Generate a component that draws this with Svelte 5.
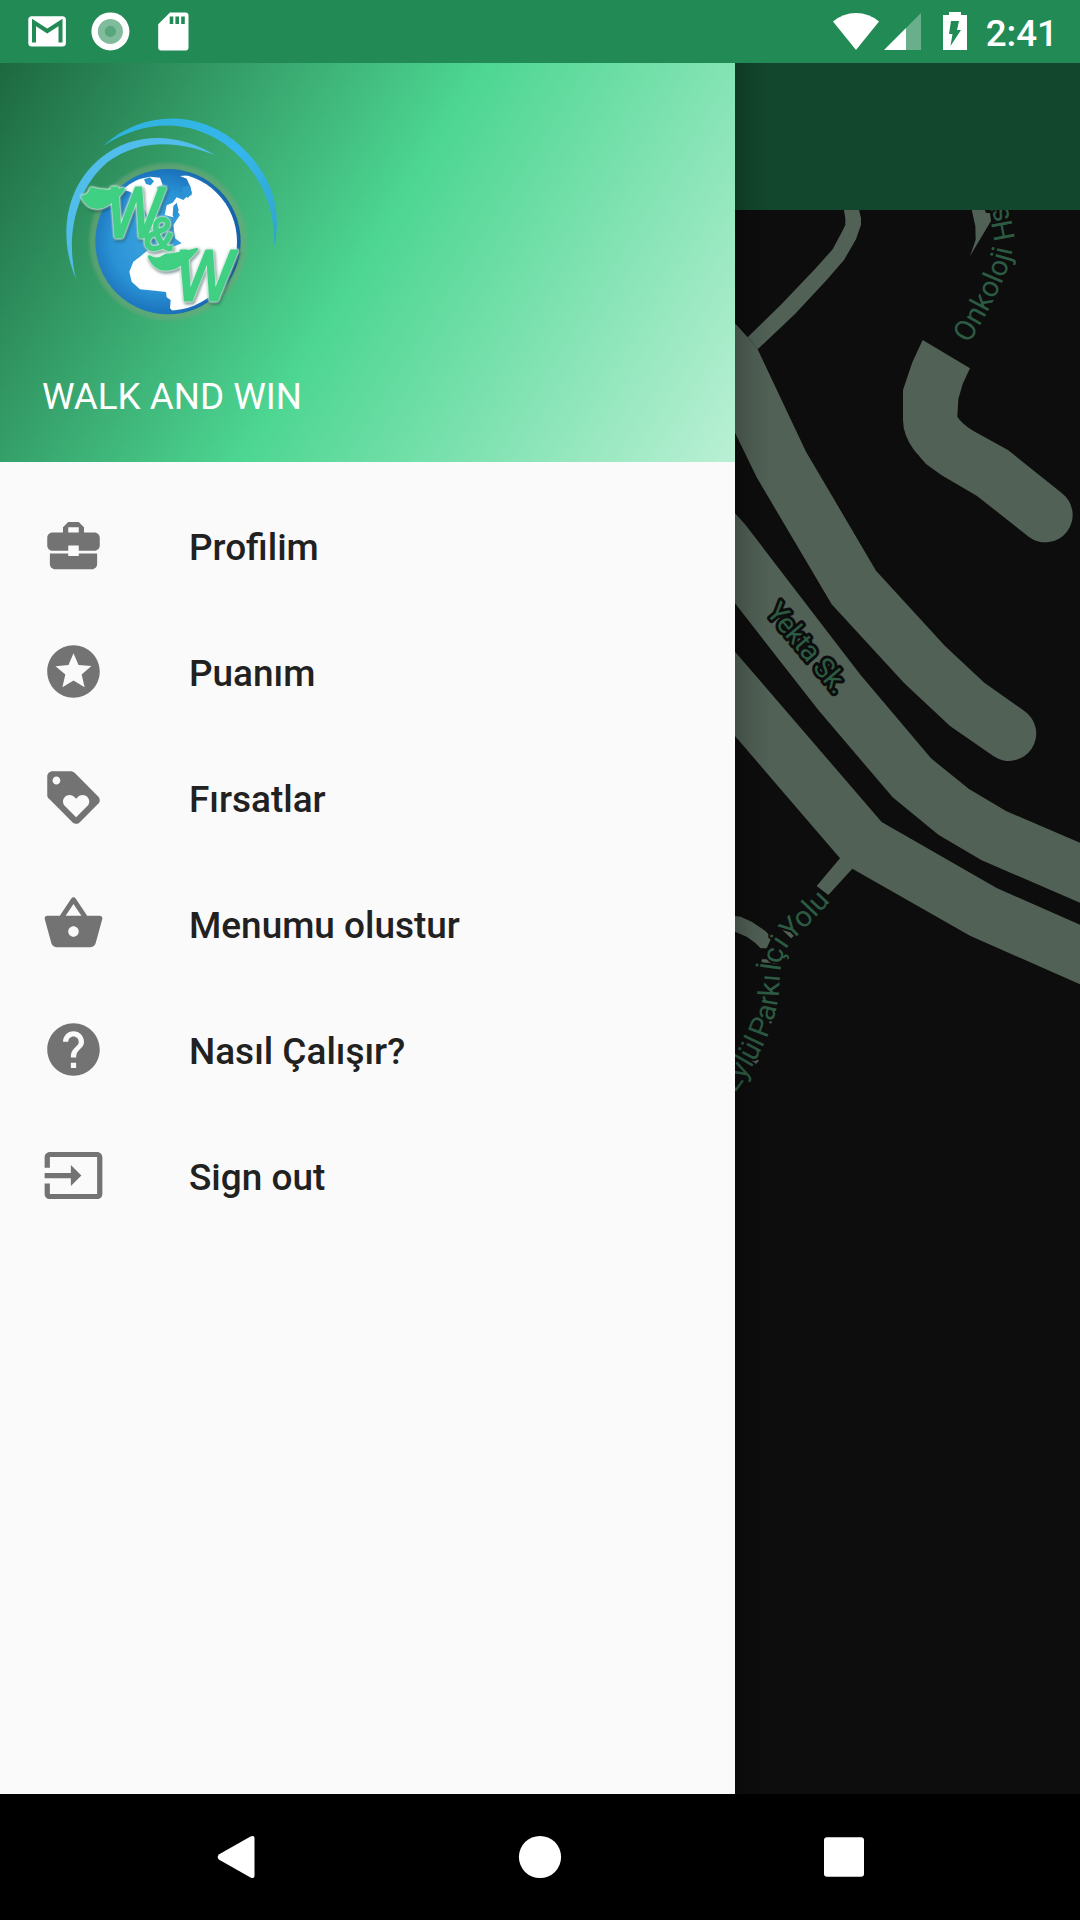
<script>
  const items = [
    { label: 'Profilim', icon: 'M10 16v-1H3.01L3 19c0 1.11.89 2 2 2h14c1.11 0 2-.89 2-2v-4h-7v1h-4zm10-9h-4.01V5l-2-2h-4l-2 2v2H4c-1.1 0-2 .9-2 2v3c0 1.11.89 2 2 2h6v-2h4v2h6c1.1 0 2-.9 2-2V9c0-1.1-.9-2-2-2zm-6 0h-4V5h4v2z' },
    { label: 'Puanım', icon: 'M11.99 2C6.47 2 2 6.48 2 12s4.47 10 9.99 10C17.52 22 22 17.52 22 12S17.52 2 11.99 2zm4.24 16L12 15.45 7.77 18l1.12-4.81-3.73-3.23 4.92-.42L12 5l1.92 4.53 4.92.42-3.73 3.23L16.23 18z' },
    { label: 'Fırsatlar', icon: 'M21.41 11.58l-9-9C12.05 2.22 11.55 2 11 2H4c-1.1 0-2 .9-2 2v7c0 .55.22 1.05.59 1.42l9 9c.36.36.86.58 1.41.58.55 0 1.05-.22 1.41-.59l7-7c.37-.36.59-.86.59-1.41 0-.55-.23-1.06-.59-1.42zM5.5 7C4.67 7 4 6.33 4 5.5S4.67 4 5.5 4 7 4.67 7 5.5 6.33 7 5.5 7zm11.77 8.27L13 19.54l-4.27-4.27C8.28 14.81 8 14.19 8 13.5c0-1.38 1.12-2.5 2.5-2.5.69 0 1.32.28 1.77.74l.73.72.73-.73c.45-.45 1.08-.73 1.77-.73 1.38 0 2.5 1.12 2.5 2.5 0 .69-.28 1.32-.73 1.77z' },
    { label: 'Menumu olustur', icon: 'M17.21 9l-4.38-6.56c-.19-.28-.51-.42-.83-.42-.32 0-.64.14-.83.43L6.79 9H2c-.55 0-1 .45-1 1 0 .09.01.18.04.27l2.54 9.27c.23.84 1 1.46 1.92 1.46h13c.92 0 1.69-.62 1.93-1.46l2.54-9.27L23 10c0-.55-.45-1-1-1h-4.79zM9 9l3-4.4L15 9H9zm3 8c-1.1 0-2-.9-2-2s.9-2 2-2 2 .9 2 2-.9 2-2 2z' },
    { label: 'Nasıl Çalışır?', icon: 'M12 2C6.48 2 2 6.48 2 12s4.48 10 10 10 10-4.48 10-10S17.52 2 12 2zm1 17h-2v-2h2v2zm2.07-7.75l-.9.92C13.45 12.9 13 13.5 13 15h-2v-.5c0-1.1.45-2.1 1.17-2.83l1.24-1.26c.37-.36.59-.86.59-1.41 0-1.1-.9-2-2-2s-2 .9-2 2H8c0-2.21 1.79-4 4-4s4 1.79 4 4c0 .88-.36 1.68-.93 2.25z' },
    { label: 'Sign out', icon: 'M21 3.01H3c-1.1 0-2 .9-2 2V9h2V4.99h18v14.03H3V15H1v4.01c0 1.1.9 1.98 2 1.98h18c1.1 0 2-.88 2-1.98v-14c0-1.11-.9-2-2-2zM11 16l4-4-4-4v3H1v2h10v3z' }
  ];
</script>

<div class="screen">
  <header class="status">
    <div class="group">
      <svg width="63" height="63" viewBox="16 0 63 63">
        <rect x="28.3" y="16.3" width="37.6" height="30.2" rx="3.5" fill="#fff" />
        <path d="M34 42.5V22.5L47.2 31 60.5 22.5V42.5" fill="none" stroke="#228a55" stroke-width="4" />
      </svg>
      <svg width="63" height="63" viewBox="79 0 63 63">
        <circle cx="110.4" cy="31.4" r="19" fill="#fff" />
        <circle cx="110.4" cy="31.4" r="12.5" fill="#80bb9c" />
        <circle cx="110.4" cy="31.4" r="5.6" fill="#58a67c" />
      </svg>
      <svg width="63" height="63" viewBox="142 0 63 63">
        <path d="M170 12.5H185.500a3 3 0 0 1 3 3V47.500a3 3 0 0 1-3 3H161.200a3 3 0 0 1-3-3V24.300z" fill="#fff" />
        <path d="M169.700 16.500h3.600V24h-3.600zM175.400 16.500h3.600V24h-3.600zM181.200 16.500h3.600V24h-3.600z" fill="#228a55" />
      </svg>
    </div>
    <div class="group">
      <svg width="46" height="63" viewBox="833 0 46 63">
        <path d="M833 21.500Q843 13 856 13T879 21.500L856 50z" fill="#fff" />
      </svg>
      <svg class="signal" width="37" height="63" viewBox="884 0 37 63">
        <path d="M921 13V50H906V28z" fill="#fff" opacity=".32" />
        <path d="M906 28V50H884z" fill="#fff" />
      </svg>
      <svg class="battery" width="24" height="63" viewBox="943 0 24 63">
        <path d="M949 12H961V15H967V50H943V15H949z" fill="#fff" />
        <path d="M951 21H959L957 30H961L950.500 46 952.500 34H949z" fill="#228a55" />
      </svg>
      <span class="time">2:41</span>
    </div>
  </header>

  <div class="body">
    <aside class="drawer">
      <div class="head">
        <svg class="logo" width="260" height="240" viewBox="0 0 780 720">
          <defs>
            <radialGradient id="sea" cx=".45" cy=".5" r=".56">
              <stop offset="0" stop-color="#3ea6e2" />
              <stop offset=".6" stop-color="#2b93d6" />
              <stop offset=".88" stop-color="#1c73bd" />
              <stop offset="1" stop-color="#165a9f" />
            </radialGradient>
            <linearGradient id="arcA" x1="0" y1="0" x2="1" y2="1">
              <stop offset="0" stop-color="#2eb3dc" />
              <stop offset=".5" stop-color="#35b6ee" />
              <stop offset="1" stop-color="#2fa5c8" />
            </linearGradient>
            <filter id="soft"><feGaussianBlur stdDeviation="1.6" /></filter>
            <filter id="shade"><feGaussianBlur stdDeviation="4" /></filter>
            <clipPath id="globe"><circle cx="384" cy="425" r="207" /></clipPath>
          </defs>
          <g filter="url(#soft)">
            <circle cx="384" cy="425" r="236" fill="#71a67a" opacity=".6" filter="url(#shade)" />
            <circle cx="384" cy="425" r="218" fill="url(#sea)" />
            <g clip-path="url(#globe)" fill="#fff">
              <path d="M420 228L440 236 452 262 455 285 440 290 430 300 410 292 398 308 380 316 374 345 400 352 410 330 420 345 400 375 405 415 425 430 400 440 330 445 300 470 280 485 268 515 275 545 300 568 345 572 378 576 380 592 392 600 390 625 405 640 640 640 640 210z" />
              <path d="M240 268L285 240 330 230 360 233 368 255 350 262 358 290 350 340 330 365 300 300 270 275z" />
            </g>
            <path d="M312 238l18-6 12 12-10 12-14-4zM428 262l20-6 8 22-12 16-16-12zM400 318l10-10 6 22-10 24-8-6z" fill="#2b93d6" />
            <path d="M190 137C300 35 462 28 578 118C695 210 730 330 702 442C706 320 664 215 554 132C440 55 315 60 190 137z" fill="url(#arcA)" />
            <path d="M527 166C420 100 285 90 182 174C74 262 54 410 108 537C76 410 106 268 203 186C300 115 415 122 527 166z" fill="#51bdea" />
            <g class="mono">
              <path d="M128 290Q148 290 154 266Q196 280 250 268Q222 306 188 320Q146 332 128 290z" />
              <text x="200" y="411" textLength="162" lengthAdjust="spacingAndGlyphs">W</text>
              <path d="M328 470Q350 486 378 466Q420 462 470 448Q440 486 406 502Q350 522 328 470z" />
              <text x="407" y="600" textLength="170" lengthAdjust="spacingAndGlyphs">W</text>
              <text class="amp" x="314" y="450" textLength="88" lengthAdjust="spacingAndGlyphs">&amp;</text>
            </g>
          </g>
        </svg>
        <div class="title">WALK AND WIN</div>
      </div>
      <nav class="menu">
        {#each items as item}
          <div class="item">
            <svg width="63" height="63" viewBox="0 0 24 24"><path d={item.icon} fill="#737373" /></svg>
            <span>{item.label}</span>
          </div>
        {/each}
      </nav>
    </aside>

    <main class="content">
      <div class="toolbar"></div>
      <svg class="map" width="345" height="1584" viewBox="45 60 1035 4752">
        <defs>
          <path id="hospital" d="M747 462Q808 360 845 280Q884 190 882 135Q876 80 845 20" />
          <path id="yekta" d="M136 1268L372 1548" />
          <path id="park" d="M-100 2835Q30 2750 84 2650Q130 2575 152 2515Q172 2460 177 2400Q180 2340 188 2300Q202 2262 245 2225Q275 2195 332 2133" />
        </defs>
        <g fill="#516156">
          <path d="M370 50L376 85 376 105 366 125 338 178 285 237 182 345 83 442 113 478 225 372 320 270 372 210 408 148 423 104 423 85 415 50z" />
          <path d="M45 400L83 442 113 478 258 785 468 1142 675 1368 793 1478 912 1562A82 82 0 0 1 821 1699L690 1608 553 1480 335 1243 110 862 45 728z" />
          <path d="M45 970L75 1003 180 1140 420 1453 633 1705 747 1797 858 1863 1080 1958V2138L785 2011 655 1934 518 1822 295 1560 45 1240z" />
          <path d="M45 1385L485 1896 830 2094 1080 2204V2383L750 2237 397 2036 325 2115 290 2088 360 2005 45 1638z" />
          <path d="M608 450L750 535 728 582 715 628 712 680Q726 702 762 724L865 781 1026 910A82 82 0 0 1 926 1040L770 917 665 856 618 822 582 780Q549 735 549 690V600L577 517z" />
          <path d="M753 50L766 108 767 150 750 198 813 93 810 70 797 68V50z" />
          <path d="M45 2178L62 2180 95 2195 135 2222 155 2242 140 2275H122L105 2258 80 2240 45 2225z" />
          <path d="M178 2211L205 2215 225 2235 213 2245zM125 2308H173V2323H158V2318H125zM95 2510L140 2528 135 2537 95 2523zM150 2480H158L155 2500H147zM85 2622L105 2600 117 2612 100 2630z" />
        </g>
        <g class="street">
          <text class="wide"><textPath href="#hospital">Onkoloji Hst.</textPath></text>
          <text class="tight"><textPath href="#yekta" textLength="326" lengthAdjust="spacing">Yekta Sk.</textPath></text>
          <text class="park" text-anchor="end"><textPath href="#park" startOffset="100%">Eylül Parkı İçi Yolu</textPath></text>
        </g>
      </svg>
    </main>
  </div>

  <footer class="navbar">
    <svg width="60" height="60" viewBox="0 0 60 60"><path d="M11.200 27.200L42.500 9.600Q46.400 7.800 46.500 11V49Q46.400 52.200 42.500 50.400L11.200 32.800Q8 30 11.200 27.200z" fill="#fff" /></svg>
    <svg width="60" height="60" viewBox="0 0 60 60"><circle cx="29" cy="30" r="21.100" fill="#fff" /></svg>
    <svg width="60" height="60" viewBox="0 0 60 60"><rect x="10" y="10.200" width="40" height="39.600" rx="3" fill="#fff" /></svg>
  </footer>
</div>

<style>
  :global(body) { margin: 0; background: #000; }
  svg { display: block; flex: none; }
  .screen {
    width: 1080px;
    height: 1920px;
    display: flex;
    flex-direction: column;
    overflow: hidden;
    font-family: Roboto, sans-serif;
  }
  .status {
    height: 63px;
    flex: none;
    box-sizing: border-box;
    padding: 0 22px 0 16px;
    display: flex;
    justify-content: space-between;
    background: #228a55;
  }
  .group { display: flex; align-items: center; }
  .signal { margin-left: 5px; }
  .battery { margin-left: 22px; }
  .time {
    margin-left: 19px;
    padding-top: 4px;
    color: #fff;
    font-size: 36.75px;
    font-weight: 500;
    line-height: 44px;
    white-space: nowrap;
  }
  .body { height: 1731px; flex: none; display: flex; }
  .drawer { width: 735px; flex: none; background: #fafafa; }
  .head {
    height: 399px;
    box-sizing: border-box;
    padding: 37px 0 0 40px;
    background: linear-gradient(121.500deg, #1d6840 0%, #4dd692 49.500%, #baf0d5 100%);
  }
  .mono {
    fill: #40d083;
    stroke: #40d083;
    stroke-width: 9px;
    stroke-linejoin: round;
    filter: drop-shadow(0 0 3px #e4f6ec) drop-shadow(0 0 3px #d8efe2) drop-shadow(3px 5px 3px rgba(10, 50, 50, .6));
  }
  .mono text { font: italic 210px 'Liberation Sans', sans-serif; }
  .mono .amp { font-size: 138px; stroke-width: 7px; }
  .title {
    padding: 35px 0 0 2px;
    color: #fff;
    font-size: 36.75px;
    line-height: 43px;
  }
  .menu { padding-top: 20px; }
  .item {
    height: 126px;
    padding-left: 42px;
    display: flex;
    align-items: center;
    gap: 84px;
    color: #212121;
    font-size: 36.95px;
    font-weight: 500;
    line-height: 44px;
  }
  .item span { padding-top: 5px; }
  .content {
    position: relative;
    flex: 1;
    background: #0d0d0d;
  }
  .content::after {
    content: '';
    position: absolute;
    inset: 0 auto 0 0;
    width: 36px;
    background: linear-gradient(90deg, rgba(0, 0, 0, .2), rgba(0, 0, 0, .07) 50%, transparent);
  }
  .toolbar { height: 147px; background: #12472d; }
  .street { fill: #2c5b43; stroke: #0d0d0d; stroke-width: 12px; paint-order: stroke; stroke-linejoin: round; font-size: 87px; }
  .wide { word-spacing: 10px; }
  .tight { stroke-width: 17px; font-size: 84px; }
  .park { word-spacing: -12px; }
  .navbar {
    flex: 1;
    display: flex;
    align-items: center;
    justify-content: space-between;
    padding: 0 206px 0 208px;
    background: #000;
  }
</style>
